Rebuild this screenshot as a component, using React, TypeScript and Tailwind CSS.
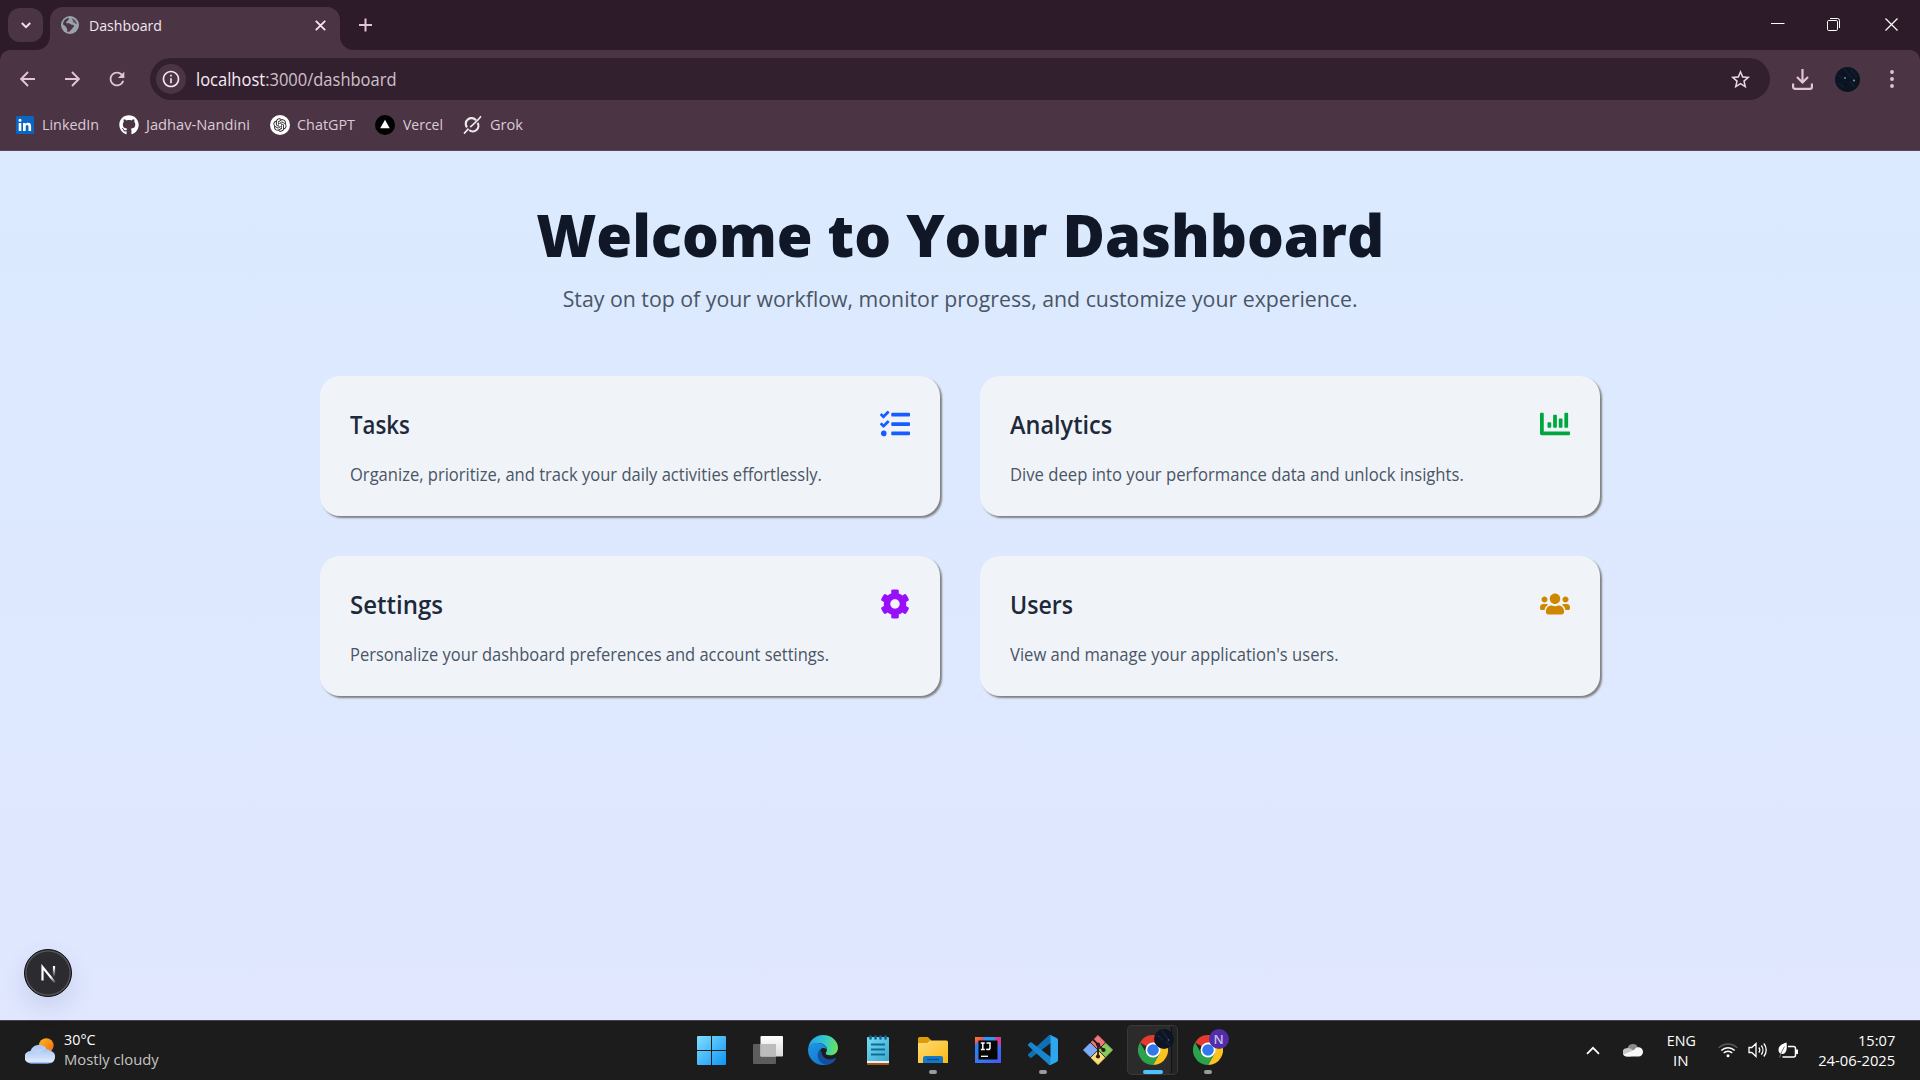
import type { ReactNode } from "react";
import { FaChartBar, FaCog, FaGithub, FaTasks, FaUsers } from "react-icons/fa";
import { RiOpenaiFill } from "react-icons/ri";
import { MdOutlineInfo, MdRefresh, MdStarOutline } from "react-icons/md";

/* ---------- Browser chrome ---------- */

function GlobeIcon() {
  return (
    <svg width="18" height="18" viewBox="0 0 18 18">
      <circle cx="9" cy="9" r="9" fill="#9aa3ad" />
      <path d="M2 8.2C2.2 5 4.5 2.4 7.6 2c.6.6.4 1.3-.3 1.8-.8.5-.6 1.4-1.6 1.8-.8.4-.9 1.3-.1 1.6 1.500.2 3-.2 3.900.8.6.8 1.700.9 2.600.9 1.300.1 1.300 1.500.3 2.100-.9.5-.8 1.700-1.700 2.300-1 .6-1.200 1.600-2.200 2.300-.8.400-1.700.3-2.400-.1l.1-2.400C6 12.300 5 11.800 4.700 10.600 4.100 9.500 2.800 9.300 2 8.200Z" fill="#4b3545" />
      <path d="M10.800 2.200c2.600.7 4.600 2.900 5.100 5.600-.9.3-1.600-.1-2.200-.8-.5-.7-1.500-.4-1.900-1.200-.3-.7.4-1.200-.1-1.900-.4-.5-1-.9-.9-1.700Z" fill="#4b3545" opacity=".75" />
    </svg>
  );
}

function TabStrip() {
  return (
    <div className="flex h-[50px] bg-[#2d1b29]">
      <div className="mt-2 ml-2 flex h-[34px] w-[35px] items-center justify-center rounded-[12px] bg-[#4b3545]">
        <svg width="10" height="7" viewBox="0 0 10 7" fill="none" stroke="#f0dfeb" strokeWidth="2">
          <path d="M.8 1 5 5.200 9.200 1" />
        </svg>
      </div>
      <div className="flex w-[7px] items-end justify-end">
        <svg className="shrink-0" width="14" height="14" viewBox="0 0 14 14">
          <path d="M14 0v14H0C8 14 14 8 14 0Z" fill="#4b3545" />
        </svg>
      </div>
      <div className="mt-[7px] flex h-[43px] w-[290px] items-center rounded-t-[13px] bg-[#4b3545] pb-[7px] pl-[11px]">
        <GlobeIcon />
        <span className="ml-[10px] origin-left scale-x-[0.943] text-[15px] leading-5 text-[#f3e6ef]">Dashboard</span>
        <svg className="mr-[14px] ml-auto" width="11" height="11" viewBox="0 0 11 11" stroke="#f3e6ef" strokeWidth="1.800">
          <path d="m.8.8 9.400 9.400M10.200.8.8 10.200" />
        </svg>
      </div>
      <div className="flex items-end">
        <svg width="14" height="14" viewBox="0 0 14 14">
          <path d="M0 0v14h14C6 14 0 8 0 0Z" fill="#4b3545" />
        </svg>
      </div>
      <svg className="mt-[18px] ml-[5px]" width="13" height="14" viewBox="0 0 13 14" stroke="#e3c3d8" strokeWidth="2">
        <path d="M6.500.500v13M0 7h13" />
      </svg>
      <div className="mt-[18px] mr-[22px] ml-auto flex h-[13px]">
        <svg width="14" height="13" viewBox="0 0 14 13" stroke="#fff" strokeWidth="1">
          <path d="M0 5.500h13.500" />
        </svg>
        <svg className="ml-[42px]" width="13" height="13" viewBox="0 0 13 13" fill="none" stroke="#fff" strokeWidth="1">
          <rect x=".5" y="2.500" width="10" height="10" rx="1.200" />
          <path d="M3 .5h7.500a2 2 0 0 1 2 2V10" />
        </svg>
        <svg className="ml-[45px]" width="13" height="13" viewBox="0 0 13 13" stroke="#fff" strokeWidth="1.200">
          <path d="m.5.5 12 12M12.500.5l-12 12" />
        </svg>
      </div>
    </div>
  );
}

function Arrow({ flip = false }: { flip?: boolean }) {
  return (
    <svg className={flip ? "rotate-180" : ""} width="15" height="16" viewBox="0 0 15 16" fill="none" stroke="#e3c3d8" strokeWidth="1.900">
      <path d="M15 8H1.400M8 1 1.200 8 8 15" />
    </svg>
  );
}

function AddressBar() {
  return (
    <div className="flex h-[58px] items-center rounded-t-[10px] bg-[#4b3545] pl-5">
      <Arrow />
      <div className="ml-[30px]"><Arrow flip /></div>
      <MdRefresh className="ml-[26px] shrink-0" size={22} color="#e3c3d8" />
      <div className="ml-[22px] flex h-[42px] w-[1620px] items-center rounded-full bg-[#33202e] pl-[6px]">
        <span className="flex h-[30px] w-[30px] items-center justify-center rounded-full bg-[#4b3545]">
          <MdOutlineInfo size={20} color="#f3e6ef" />
        </span>
        <span className="ml-[10px] origin-left scale-x-[0.943] text-[17.5px] leading-6 text-[#cfc0ca]">
          <span className="text-[#f6ebf3]">localhost</span>:3000/dashboard
        </span>
        <MdStarOutline className="mr-[18px] ml-auto" size={23} color="#e8d5e2" />
      </div>
      <svg className="ml-[22px]" width="21" height="21" viewBox="0 0 21 21" fill="none" stroke="#e3c3d8" strokeWidth="2.200">
        <path d="M10.500 0v13M5 8l5.500 5.500L16 8M1.100 14.500V18a1.900 1.900 0 0 0 1.900 1.900h15a1.900 1.900 0 0 0 1.900-1.900v-3.500" />
      </svg>
      <svg className="ml-[22px]" width="25" height="25" viewBox="0 0 25 25">
        <circle cx="12.500" cy="12.500" r="12.500" fill="#0c1422" />
        <path d="M3 8l5 4M9 2l9 10M15 15l5 5M4 17l5 3M16 3l6 7" stroke="#111e33" strokeWidth="1.500" />
        <circle cx="10" cy="11" r="1" fill="#5f86b0" />
        <circle cx="19" cy="13.500" r="1.100" fill="#6a93c0" />
        <circle cx="11" cy="18" r=".8" fill="#02060c" />
      </svg>
      <svg className="ml-[30px]" width="4" height="18" viewBox="0 0 4 18" fill="#e3c3d8">
        <circle cx="2" cy="2" r="1.900" />
        <circle cx="2" cy="9" r="1.900" />
        <circle cx="2" cy="16" r="1.900" />
      </svg>
    </div>
  );
}

function Bookmark({ icon, children, className }: { icon: ReactNode; children: ReactNode; className: string }) {
  return (
    <div className={"flex items-center whitespace-nowrap " + className}>
      {icon}
      {children}
    </div>
  );
}

function Bookmarks() {
  return (
    <div className="flex h-[43px] items-center border-b border-[#5d4557] bg-[#4b3545] pb-[8px] pl-4 text-[15px] leading-5 text-[#dccbd6]">
      <Bookmark
        className="w-[103px] gap-2"
        icon={
          <svg width="18" height="18" viewBox="0 0 18 18">
            <rect width="18" height="18" rx="1.500" fill="#0a66c2" />
            <path d="M2.700 6.900h2.600v8.200H2.700zM4 2.700a1.500 1.500 0 1 1 0 3.100 1.500 1.500 0 0 1 0-3.100ZM7 6.900h2.500V8c.4-.700 1.200-1.300 2.500-1.300 2.600 0 3.100 1.700 3.100 3.900v4.500h-2.600v-4c0-1 0-2.200-1.300-2.200s-1.500 1-1.500 2.100v4.100H7z" fill="#fff" />
          </svg>
        }
      >
        <span className="origin-left scale-x-[0.955] pb-[2px]">LinkedIn</span>
      </Bookmark>
      <Bookmark className="w-[151px] gap-[7px]" icon={<FaGithub size={20} color="#fff" />}>
        <span className="origin-left scale-x-[0.979] pb-[2px]">Jadhav-Nandini</span>
      </Bookmark>
      <Bookmark
        className="w-[105px] gap-[7px]"
        icon={
          <span className="flex h-5 w-5 items-center justify-center rounded-full bg-white">
            <RiOpenaiFill size={16} color="#222" />
          </span>
        }
      >
        <span className="origin-left scale-x-[0.959] pb-[2px]">ChatGPT</span>
      </Bookmark>
      <Bookmark
        className="w-[88px] gap-2"
        icon={
          <svg width="20" height="20" viewBox="0 0 20 20">
            <circle cx="10" cy="10" r="10" fill="#000" />
            <path d="m10 4.800 4.800 8.400H5.200Z" fill="#fff" />
          </svg>
        }
      >
        <span className="origin-left scale-x-[0.932] pb-[2px]">Vercel</span>
      </Bookmark>
      <Bookmark
        className="gap-2"
        icon={
          <svg width="19" height="20" viewBox="0 0 19 20" fill="none" stroke="#f1e8ee" strokeWidth="2.200">
            <path d="M13 5.300A5.600 5.600 0 0 0 4 12.400M6.200 15A5.600 5.600 0 0 0 14.600 7.800" />
            <path d="M18 1.200C15 5.300 11 8.700 7.200 12.100M1 18.600 5.500 13.600" strokeWidth="1.600" />
          </svg>
        }
      >
        <span className="origin-left scale-x-[0.97] pb-[2px]">Grok</span>
      </Bookmark>
    </div>
  );
}

/* ---------- Dashboard page ---------- */

const cards = [
  {
    title: "Tasks",
    titleClass: "scale-x-[0.909]",
    text: "Organize, prioritize, and track your daily activities effortlessly.",
    textClass: "scale-x-[0.9455]",
    icon: <FaTasks size={30} className="text-[#155dfc]" />,
  },
  {
    title: "Analytics",
    titleClass: "scale-x-[0.958]",
    text: "Dive deep into your performance data and unlock insights.",
    textClass: "scale-x-[0.951]",
    icon: <FaChartBar size={30} className="text-[#00a63e]" />,
  },
  {
    title: "Settings",
    titleClass: "scale-x-[0.98]",
    text: "Personalize your dashboard preferences and account settings.",
    textClass: "scale-x-[0.9425]",
    icon: <FaCog size={30} className="text-[#9810fa]" />,
  },
  {
    title: "Users",
    titleClass: "scale-x-[0.943]",
    text: "View and manage your application's users.",
    textClass: "scale-x-[0.949]",
    icon: <FaUsers size={30} className="text-[#d08700]" />,
  },
];

function Dashboard() {
  return (
    <main className="flex h-[869px] flex-col items-center bg-linear-to-b from-[#dbeafe] to-[#e0e7ff] px-80 pt-[50px]">
      <h1 className="h-[62px] scale-x-[0.981] pt-[3px] text-[59px] leading-[60px] font-extrabold whitespace-nowrap text-[#101828]">
        Welcome to Your Dashboard
      </h1>
      <p className="mt-[18px] scale-x-[0.946] text-[22.500px] leading-[35px] whitespace-nowrap text-[#4a5565]">
        Stay on top of your workflow, monitor progress, and customize your experience.
      </p>
      <div className="mt-[60px] grid w-full grid-cols-2 gap-10">
        {cards.map((card) => (
          <section key={card.title} className="flex h-[140px] flex-col items-start rounded-[20px] bg-[#f0f4f9] p-[30px] shadow-[2px_2px_2px_gray]">
            <div className="flex h-[35px] w-full items-center justify-between">
              <h2 className={"origin-left pt-[2px] text-[24.500px] leading-[35px] font-semibold text-[#1e2939] " + card.titleClass}>{card.title}</h2>
              {card.icon}
            </div>
            <p className={"mt-[21px] origin-left text-[17.500px] leading-[25px] whitespace-nowrap text-[#4a5565] " + card.textClass}>{card.text}</p>
          </section>
        ))}
      </div>
      <div className="mt-auto mb-[23px] -ml-[296px] flex h-12 w-12 items-center justify-center self-start rounded-full border border-[#0c0c0e] bg-[#2b2b30] shadow-[inset_0_0_0_1.500px_#55555a,0_10px_24px_rgba(70,70,120,0.14)]">
        <svg width="17" height="19" viewBox="0 0 17 19" fill="none" strokeWidth="2.200">
          <defs>
            <linearGradient id="diag" x1="1" y1="1" x2="15" y2="18" gradientUnits="userSpaceOnUse">
              <stop offset=".7" stopColor="#fff" />
              <stop offset="1" stopColor="#fff" stopOpacity="0.15" />
            </linearGradient>
            <linearGradient id="stem" x1="0" y1="1" x2="0" y2="13" gradientUnits="userSpaceOnUse">
              <stop offset=".2" stopColor="#fff" />
              <stop offset="1" stopColor="#fff" stopOpacity="0" />
            </linearGradient>
          </defs>
          <path d="M2.500 16.500V3L15 18.500" stroke="url(#diag)" />
          <path d="M14 2v11" stroke="url(#stem)" />
        </svg>
      </div>
    </main>
  );
}

/* ---------- Taskbar ---------- */

function WeatherIcon() {
  return (
    <svg width="30" height="26" viewBox="0 0 30 26">
      <defs>
        <linearGradient id="sun" x1="0" y1="0" x2="1" y2="1">
          <stop stopColor="#ffb81f" />
          <stop offset="1" stopColor="#ee6a12" />
        </linearGradient>
        <linearGradient id="cloud" x1="0" y1="0" x2="0" y2="1">
          <stop stopColor="#a9c5f6" />
          <stop offset=".85" stopColor="#dfeafc" />
          <stop offset="1" stopColor="#7ea6ea" />
        </linearGradient>
      </defs>
      <circle cx="21.300" cy="7.500" r="7.300" fill="url(#sun)" />
      <path d="M6 25.500A6 6 0 0 1 5.500 13 9 9 0 0 1 21 10l2 15.500Z" fill="url(#cloud)" />
      <path d="M6.500 25.500a6 6 0 0 1 0-12c4 0 4 1.500 7 2.500 3-5 9-6 12.500-3a6.500 6.500 0 0 1-2 12.500Z" fill="url(#cloud)" />
    </svg>
  );
}

function ChromeIcon() {
  return (
    <svg width="30" height="30" viewBox="0 0 48 48">
      <path d="M24 24 3.200 12A24 24 0 0 1 44.800 12Z" fill="#e33b2e" />
      <path d="M24 12h20.800A24 24 0 0 1 24 48l10.400-18Z" fill="#fcc31e" />
      <path d="M34.400 30 24 48A24 24 0 0 1 3.200 12L13.600 30Z" fill="#2ba24c" />
      <circle cx="24" cy="24" r="12" fill="#fff" />
      <circle cx="24" cy="24" r="9.300" fill="#3079ec" />
    </svg>
  );
}

function TaskbarApp({ children, running = false }: { children: ReactNode; running?: boolean }) {
  return (
    <div className="relative flex h-[58px] w-[55px] shrink-0 items-center justify-center">
      {children}
      {running && <span className="absolute top-[49px] left-[23.500px] h-1 w-2 rounded-full bg-[#9a9a9a]" />}
    </div>
  );
}

function TaskbarApps() {
  return (
    <div className="flex">
      <TaskbarApp>
        <svg className="mr-[2px]" width="29" height="29" viewBox="0 0 29 29">
          <defs>
            <linearGradient id="win" x1="0" y1="0" x2="29" y2="29" gradientUnits="userSpaceOnUse">
              <stop stopColor="#7fe0fd" />
              <stop offset="1" stopColor="#0e93f5" />
            </linearGradient>
          </defs>
          <path d="M1 0h13v14H0V1a1 1 0 0 1 1-1ZM15 0h13a1 1 0 0 1 1 1v13H15ZM0 15h14v14H1a1 1 0 0 1-1-1ZM15 15h14v13a1 1 0 0 1-1 1H15Z" fill="url(#win)" />
        </svg>
      </TaskbarApp>
      <TaskbarApp>
        <svg width="30" height="28" viewBox="0 0 30 28">
          <defs>
            <linearGradient id="pane" x1="0" y1="0" x2="0" y2="1">
              <stop stopColor="#fff" />
              <stop offset="1" stopColor="#d9d9d9" />
            </linearGradient>
          </defs>
          <rect y="8" width="23" height="20" rx="1" fill="#5d5d5d" />
          <rect x="7.500" width="22.500" height="20.500" rx="1" fill="url(#pane)" />
          <path d="M7.500 8H23v12.500H7.500Z" fill="#bcbcbc" />
        </svg>
      </TaskbarApp>
      <TaskbarApp>
        <svg width="30" height="30" viewBox="0 0 30 30">
          <defs>
            <linearGradient id="edgeTop" x1="2" y1="8" x2="29" y2="14" gradientUnits="userSpaceOnUse">
              <stop stopColor="#2aa5e6" />
              <stop offset=".5" stopColor="#33c7cf" />
              <stop offset="1" stopColor="#68e45c" />
            </linearGradient>
            <linearGradient id="edgeLeft" x1="3" y1="10" x2="14" y2="30" gradientUnits="userSpaceOnUse">
              <stop stopColor="#1c93e2" />
              <stop offset="1" stopColor="#1377d0" />
            </linearGradient>
          </defs>
          <path d="M.3 13C1.300 5.500 7.300 0 15 0c9 0 15 6.500 15 12.500 0 5-3.500 7.800-8 7.800-2.600 0-4.400-.8-4.400-2 0-.9 1.400-1.400 1.400-3.800C19 11 15 8 10.500 8 5 8 1.500 10.500.3 13Z" fill="url(#edgeTop)" />
          <path d="M0 15C0 10 4.500 8 9.500 8c5.700 0 9.500 3.400 9.500 7-1.200-2.300-5-3-7 .2C9.500 20 13 27 20.500 29A15 15 0 0 1 0 15Z" fill="url(#edgeLeft)" />
          <path d="M12.300 14.500C8.500 17 8.500 25 14.500 28.500c5.500 3 11-.2 13.200-4.500.4-.8-.2-1.200-1-.7-5 2.700-12.500.2-12.900-5Z" fill="#12509f" />
        </svg>
      </TaskbarApp>
      <TaskbarApp>
        <svg width="22" height="30" viewBox="0 0 22 30">
          <defs>
            <linearGradient id="note" x1="0" y1="0" x2="1" y2="1">
              <stop stopColor="#77dcf4" />
              <stop offset="1" stopColor="#3ba8d0" />
            </linearGradient>
          </defs>
          <rect y="25" width="22" height="5" rx="1" fill="#a8551a" />
          <rect y="24" width="22" height="4" fill="#f2ede6" />
          <rect y="2" width="22" height="24" rx="1" fill="url(#note)" />
          <path d="M3.500 1.500v2M8.500 1.500v2M13.500 1.500v2M18.500 1.500v2" stroke="#0d6590" strokeWidth="2.600" strokeLinecap="round" />
          <path d="M4 9.500h14M4 14.500h14M4 19.500h14" stroke="#0e6c98" strokeWidth="2" />
        </svg>
      </TaskbarApp>
      <TaskbarApp running>
        <svg width="30" height="26" viewBox="0 0 30 26">
          <defs>
            <linearGradient id="folder" x1="0" y1="0" x2="1" y2="1">
              <stop stopColor="#ffdc73" />
              <stop offset="1" stopColor="#fbb814" />
            </linearGradient>
          </defs>
          <path d="M0 1.500A1.500 1.500 0 0 1 1.500 0h8.300L13 3v5H0Z" fill="#dd9a0b" />
          <path d="M0 6h9l3-2.500h16.500A1.500 1.500 0 0 1 30 5v21H0Z" fill="url(#folder)" />
          <path d="M5 26v-5a2 2 0 0 1 2-2h16a2 2 0 0 1 2 2v5Z" fill="#1478c8" />
          <path d="M9 22.500h12" stroke="#0b4f91" strokeWidth="1.400" />
        </svg>
      </TaskbarApp>
      <TaskbarApp>
        <svg width="26" height="26" viewBox="0 0 26 26">
          <defs>
            <linearGradient id="idea" x1="0" y1="0" x2="1" y2="1">
              <stop stopColor="#fc801d" />
              <stop offset=".25" stopColor="#e0407a" />
              <stop offset=".5" stopColor="#2b7ff5" />
              <stop offset="1" stopColor="#4d55f3" />
            </linearGradient>
          </defs>
          <rect width="26" height="26" fill="url(#idea)" />
          <path d="M0 8v12l4-3V4Z" fill="#2b7ff5" />
          <path d="M8 0h14l-2 4H9Z" fill="#2b9af5" />
          <path d="M19 0h7v9l-4-2Z" fill="#fe2d73" opacity=".75" />
          <rect x="3.500" y="3.500" width="19" height="19" fill="#060606" />
          <path d="M5.800 6h4M7.800 6v6.500M5.800 12.500h4M11.500 6h3.500v4.800c0 1.200-.7 1.800-1.700 1.800-.8 0-1.400-.3-1.900-.9" stroke="#fff" strokeWidth="1.500" fill="none" />
          <path d="M6 19.300h7" stroke="#fff" strokeWidth="1.300" />
        </svg>
      </TaskbarApp>
      <TaskbarApp running>
        <svg width="30" height="30" viewBox="0 0 100 100">
          <path d="M96.460 10.800 75.860.880C73.470-.270 70.620.210 68.750 2.080L1.300 63.580a4.170 4.170 0 0 0 0 6.170l5.510 5a4.170 4.170 0 0 0 5.320.24l81.230-61.620c2.720-2.070 6.640-.12 6.640 3.300v-.24a6.250 6.250 0 0 0-3.540-5.630Z" fill="#0f70b3" />
          <path d="m96.460 89.200-20.600 9.920a6.230 6.230 0 0 1-7.110-1.200L1.300 36.420a4.170 4.170 0 0 1 0-6.170l5.510-5a4.170 4.170 0 0 1 5.320-.24l81.230 61.620c2.720 2.070 6.640.12 6.640-3.300v.24a6.250 6.250 0 0 1-3.540 5.630Z" fill="#1a85cc" />
          <path d="M75.860 99.130a6.230 6.230 0 0 1-7.110-1.210c2.310 2.300 6.250.67 6.250-2.590V4.670c0-3.260-3.940-4.890-6.250-2.590a6.230 6.230 0 0 1 7.110-1.210l20.600 9.910A6.250 6.250 0 0 1 100 16.410v67.180c0 2.400-1.380 4.590-3.540 5.630Z" fill="#2ea6ef" />
        </svg>
      </TaskbarApp>
      <TaskbarApp>
        <svg width="30" height="30" viewBox="0 0 30 30">
          <path d="m15 .5 6.800 6.800L15 14.100 8.200 7.300Z" fill="#f2767b" stroke="#f2767b" strokeLinejoin="round" />
          <path d="m7.300 8.200 6.800 6.800-6.800 6.800L.5 15Z" fill="#7cacf8" stroke="#7cacf8" strokeLinejoin="round" />
          <path d="m22.700 8.200 6.800 6.800-6.800 6.800-6.800-6.800Z" fill="#86c95c" stroke="#86c95c" strokeLinejoin="round" />
          <path d="m15 15.900 6.800 6.800L15 29.500l-6.800-6.800Z" fill="#fbdc7b" stroke="#fbdc7b" strokeLinejoin="round" />
          <path d="M10 4.500 15 9.500v12M15 10l5.500 5" stroke="#2a1a18" strokeWidth="1.800" fill="none" />
          <g fill="#2a1a18">
            <circle cx="15" cy="9.500" r="2.100" />
            <circle cx="20.500" cy="15" r="2.100" />
            <circle cx="15" cy="21.500" r="2.100" />
          </g>
        </svg>
      </TaskbarApp>
      <div className="relative flex h-[58px] w-[55px] shrink-0 items-center justify-center">
        <span className="absolute top-[4px] left-[10px] h-[50px] w-[43px] rounded-[5px] border border-[#383838] bg-[#242424]" />
        <span className="absolute top-[4px] left-[2px] h-[50px] w-[45px] rounded-[5px] border border-[#383838] border-r-[#111] bg-[#2b2b2b]" />
        <span className="relative">
          <ChromeIcon />
        </span>
        <svg className="absolute top-[8px] left-[28.500px]" width="20" height="20" viewBox="0 0 20 20">
          <circle cx="10" cy="10" r="10" fill="#0d1524" />
          <path d="M3 6l6 5M8 2l7 9M12 13l4 3" stroke="#18263e" strokeWidth="1.300" />
          <circle cx="14.500" cy="11" r=".8" fill="#4d6e95" />
        </svg>
        <span className="absolute top-[49px] left-[17.500px] h-1 w-5 rounded-full bg-[#4cc2ff]" />
      </div>
      <TaskbarApp running>
        <ChromeIcon />
        <span className="absolute top-[8px] left-[28.500px] flex h-5 w-5 items-center justify-center rounded-full bg-[#512da8] text-[13px] leading-none font-semibold text-[#c9bcec]">
          N
        </span>
      </TaskbarApp>
    </div>
  );
}

function Tray() {
  return (
    <div className="ml-auto flex h-[58px] items-center pr-[25px]">
      <svg width="14" height="9" viewBox="0 0 14 9" fill="none" stroke="#fff" strokeWidth="1.700">
        <path d="m1 7.800 6-6 6 6" />
      </svg>
      <svg className="ml-[23px]" width="20" height="14" viewBox="0 0 20 14">
        <path d="M4.500 5.500A5.500 5.500 0 0 1 15 4.500L9 10Z" fill="#8b8b8b" />
        <path d="M4 13.500A4 4 0 0 1 3.500 5.300C6 4.600 8 5.500 11 8l-3 5.500Z" fill="#c6c6c6" />
        <path d="M15 4.300c3 0 5 2 5 4.600s-2 4.600-4.500 4.600H4c-1.500 0-2.700-.7-3.400-2L11 7c1-1.500 2.300-2.700 4-2.700Z" fill="#f6f6f6" />
      </svg>
      <div className="ml-[23px] w-[30px] text-center leading-5">
        <div className="scale-x-[0.95]">ENG</div>
        <div>IN</div>
      </div>
      <svg className="ml-[22px]" width="20" height="16" viewBox="0 0 20 16" fill="none" stroke="#fff" strokeWidth="1.400">
        <path d="M.8 5.800a13 13 0 0 1 18.400 0" stroke="#5a5a5a" />
        <path d="M3.300 8.500a9.500 9.500 0 0 1 13.400 0M5.700 11a6 6 0 0 1 8.600 0" />
        <circle cx="10" cy="13.700" r="1.500" fill="#fff" stroke="none" />
      </svg>
      <svg className="ml-[10px]" width="20" height="16" viewBox="0 0 20 16" fill="none" stroke="#fff" strokeWidth="1.300">
        <path d="M1 5.500h2.800L8 1.500v13l-4.200-4H1ZM10.800 5.500a4 4 0 0 1 0 5M13.300 3.500a7 7 0 0 1 0 9M15.800 1.500a10 10 0 0 1 0 13" />
      </svg>
      <svg className="ml-[10px]" width="21" height="17" viewBox="0 0 21 17" fill="none" stroke="#fff" strokeWidth="1.500">
        <path d="M10 4.500h5.500a2 2 0 0 1 2 2V13a2 2 0 0 1-2 2H4.500" />
        <path d="M18.800 7.500v4.500" strokeWidth="2.400" />
        <path d="M8.500.5C4 2 .5 3.500.5 8c0 2.500 1.700 4 3.800 4C8 12 9.500 8 8.500.5Z" fill="#fff" stroke="none" />
        <path d="M6.500 4.500C4.500 8 3 11 1.500 15.500" stroke="#777" strokeWidth="1" />
      </svg>
      <div className="ml-[18px] flex flex-col items-end pb-px leading-5">
        <div className="origin-right scale-x-[0.975]">15:07</div>
        <div className="origin-right scale-x-[0.985]">24-06-2025</div>
      </div>
    </div>
  );
}

function Taskbar() {
  return (
    <footer className="flex h-[60px] border-t border-[#454547] bg-[#1c1c1c] text-[15px] text-white">
      <div className="flex w-[685px] shrink-0 items-center pl-[25px]">
        <WeatherIcon />
        <div className="ml-[9px] flex flex-col items-start pb-[4px] leading-5">
          <div className="origin-left scale-x-[0.955]">30°C</div>
          <div className="origin-left scale-x-[0.985] text-[#c4c4c4]">Mostly cloudy</div>
        </div>
      </div>
      <TaskbarApps />
      <Tray />
    </footer>
  );
}

export default function App() {
  return (
    <div className="h-[1080px] w-[1920px] overflow-hidden bg-[#2d1b29] font-['Open_Sans',sans-serif]">
      <TabStrip />
      <AddressBar />
      <Bookmarks />
      <Dashboard />
      <Taskbar />
    </div>
  );
}
